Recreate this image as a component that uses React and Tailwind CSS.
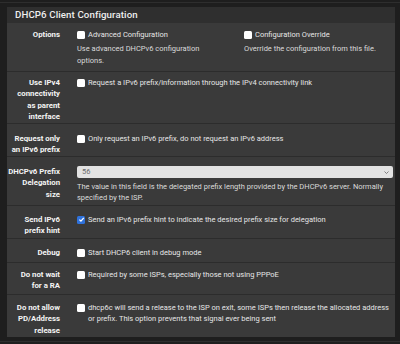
// App.jsx
import React from "react";

const Box = ({ checked }) =>
  checked ? (
    <span className="w-[8px] h-[8px] shrink-0 rounded-[1.5px] bg-[#2f72dc] flex items-center justify-center">
      <svg viewBox="0 0 10 10" className="w-[7px] h-[7px]">
        <path d="M2 5.2 L4.2 7.4 L8.2 2.8" fill="none" stroke="#fff" strokeWidth="1.8" />
      </svg>
    </span>
  ) : (
    <span className="w-[8px] h-[8px] shrink-0 rounded-[1.5px] bg-white" />
  );

const Check = ({ checked, children }) => (
  <div className="flex items-center gap-[3px] h-[11.3px]">
    <Box checked={checked} />
    <span className="whitespace-nowrap">{children}</span>
  </div>
);

const Row = ({ label, h, pt, first, children }) => (
  <div
    className={"flex " + (first ? "" : "border-t border-[#2c2c2c]")}
    style={{ height: h, paddingTop: pt }}
  >
    <div className="w-[60px] shrink-0 pr-[7px] text-right text-[7.8px] font-bold text-[#f4f4f4] whitespace-nowrap">
      {label}
    </div>
    <div className="flex-1 min-w-0 pl-[10px] pr-[2px] text-[#e6e6e6]">{children}</div>
  </div>
);

const App = () => {
  return (
    <div
      className="w-[400px] h-[344px] overflow-hidden bg-[#1e1e1e] text-[7.5px] leading-[11.3px]"
      style={{ fontFamily: "Roboto, 'Noto Sans', sans-serif" }}
    >
      <div className="h-[7px] pt-[2px]">
        <div className="h-[1px] bg-[#2e2e2e]" />
      </div>
      <div className="ml-[7px] mr-[5px] bg-[#3a3a3a]">
        <div className="h-[16px] bg-[#2f2f2f] pl-[8px] flex items-center text-[9.7px] font-medium text-[#eeeeee] tracking-[0.1px]">
          DHCP6 Client Configuration
        </div>

        <Row label="Options" h={48} pt={6} first>
          <div className="flex">
            <div className="w-[167px] pr-[12px]">
              <Check>Advanced Configuration</Check>
              <div className="mt-[3px] leading-[12px] text-[#dadada]">
                Use advanced DHCPv6 configuration
                <br />
                options.
              </div>
            </div>
            <div>
              <Check>Configuration Override</Check>
              <div className="mt-[3px] leading-[12px] text-[#dadada] whitespace-nowrap">
                Override the configuration from this file.
              </div>
            </div>
          </div>
        </Row>

        <Row
          label={
            <>
              Use IPv4
              <br />
              connectivity
              <br />
              as parent
              <br />
              interface
            </>
          }
          h={52}
          pt={5}
        >
          <Check>Request a IPv6 prefix/information through the IPv4 connectivity link</Check>
        </Row>

        <Row
          label={
            <>
              Request only
              <br />
              an IPv6 prefix
            </>
          }
          h={33}
          pt={9}
        >
          <Check>Only request an IPv6 prefix, do not request an IPv6 address</Check>
        </Row>

        <Row
          label={
            <>
              DHCPv6 Prefix
              <br />
              Delegation
              <br />
              size
            </>
          }
          h={49}
          pt={9}
        >
          <div className="h-[12px] rounded-[2px] bg-[#e2e2e2] flex items-center justify-between pl-[5px] pr-[4px] text-[#6a6a6a]">
            <span>56</span>
            <svg viewBox="0 0 10 6" className="w-[5px] h-[3px]">
              <path d="M1 1 L5 5 L9 1" fill="none" stroke="#666" strokeWidth="1.6" />
            </svg>
          </div>
          <div className="mt-[2.5px] text-[#dadada] whitespace-nowrap">
            The value in this field is the delegated prefix length provided by the DHCPv6 server. Normally
            <br />
            specified by the ISP.
          </div>
        </Row>

        <Row
          label={
            <>
              Send IPv6
              <br />
              prefix hint
            </>
          }
          h={33}
          pt={8}
        >
          <Check checked>Send an IPv6 prefix hint to indicate the desired prefix size for delegation</Check>
        </Row>

        <Row label="Debug" h={24} pt={8}>
          <Check>Start DHCP6 client in debug mode</Check>
        </Row>

        <Row
          label={
            <>
              Do not wait
              <br />
              for a RA
            </>
          }
          h={32}
          pt={6}
        >
          <Check>Required by some ISPs, especially those not using PPPoE</Check>
        </Row>

        <Row
          label={
            <>
              Do not allow
              <br />
              PD/Address
              <br />
              release
            </>
          }
          h={43}
          pt={7}
        >
          <div className="flex gap-[3px]">
            <div className="h-[11.3px] flex items-center">
              <Box />
            </div>
            <div className="whitespace-nowrap">
              dhcp6c will send a release to the ISP on exit, some ISPs then release the allocated address
              <br />
              or prefix. This option prevents that signal ever being sent
            </div>
          </div>
        </Row>
      </div>
      <div className="h-[4px]" />
      <div className="h-[1px] bg-[#2e2e2e]" />
    </div>
  );
};

export default App;
